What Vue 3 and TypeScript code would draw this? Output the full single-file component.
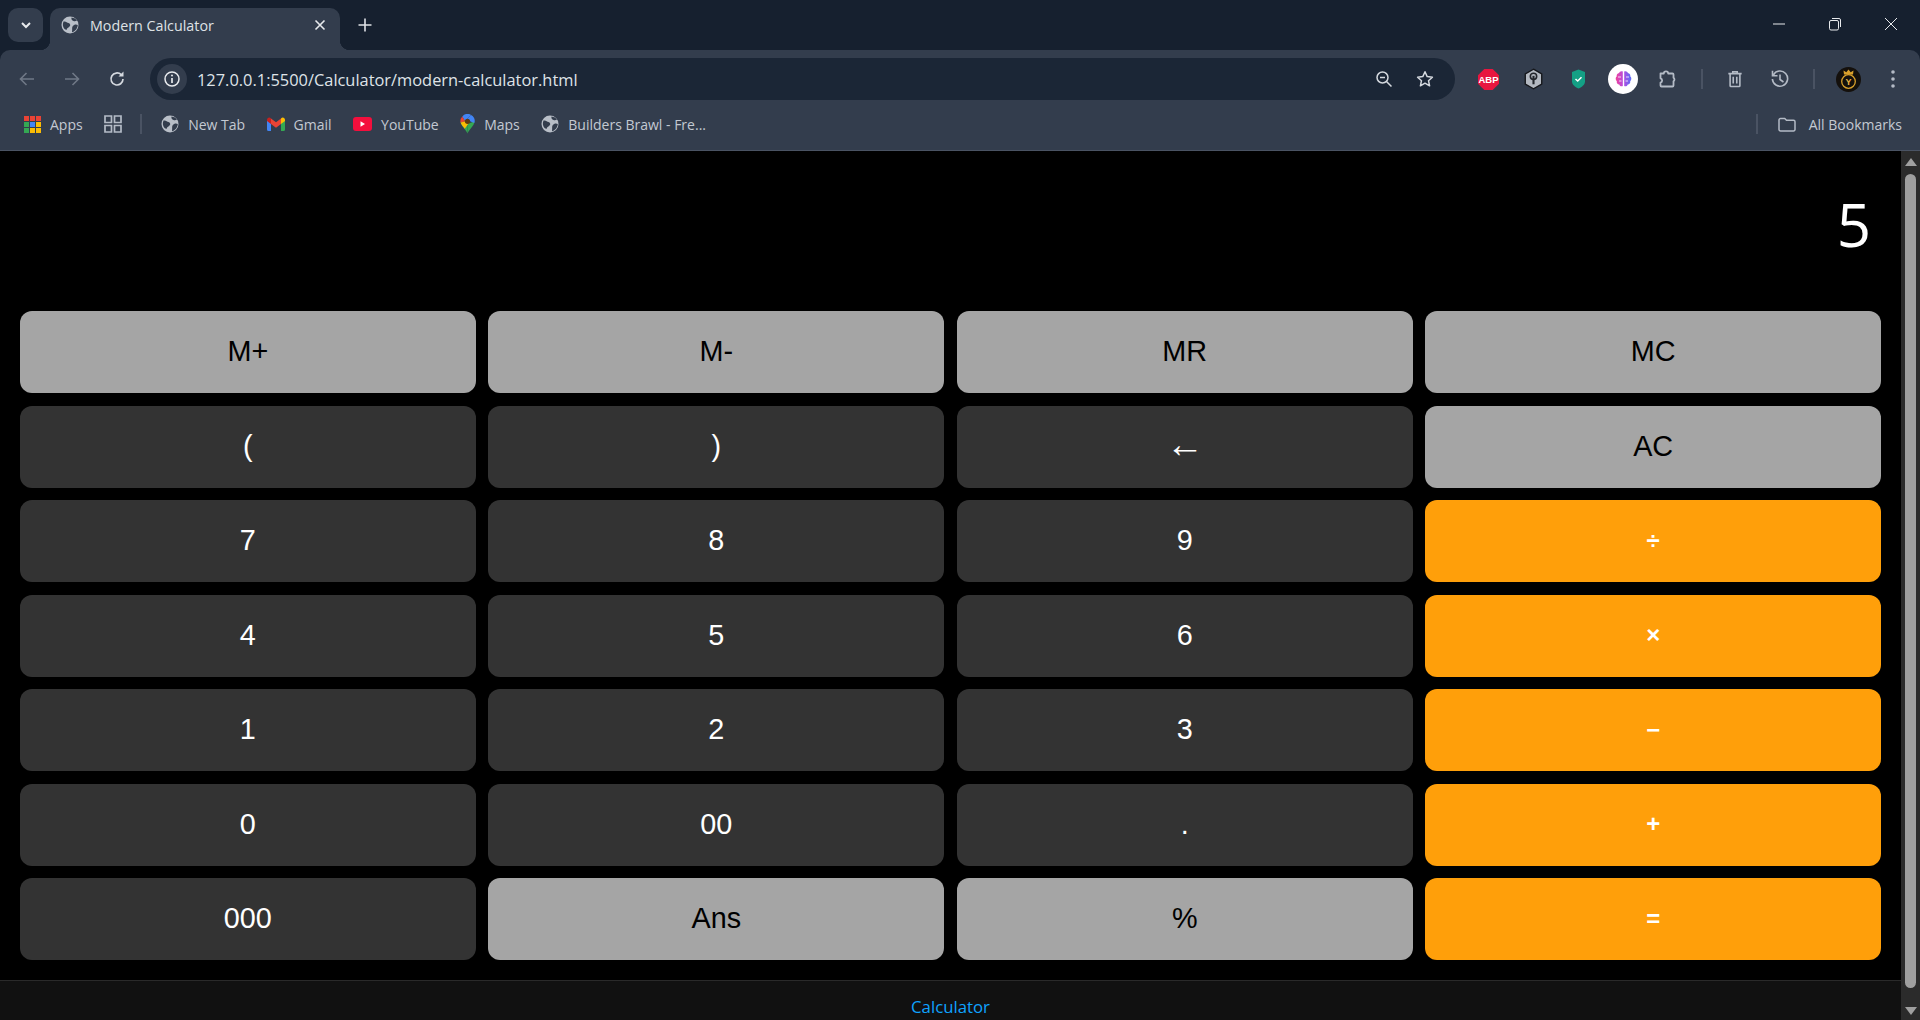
<script setup lang="ts">
type Kind = 'gray' | 'dark' | 'op'

interface Key {
  label: string
  kind: Kind
}

const keys: Key[] = [
  { label: 'M+', kind: 'gray' },
  { label: 'M-', kind: 'gray' },
  { label: 'MR', kind: 'gray' },
  { label: 'MC', kind: 'gray' },
  { label: '(', kind: 'dark' },
  { label: ')', kind: 'dark' },
  { label: '←', kind: 'dark' },
  { label: 'AC', kind: 'gray' },
  { label: '7', kind: 'dark' },
  { label: '8', kind: 'dark' },
  { label: '9', kind: 'dark' },
  { label: '÷', kind: 'op' },
  { label: '4', kind: 'dark' },
  { label: '5', kind: 'dark' },
  { label: '6', kind: 'dark' },
  { label: '×', kind: 'op' },
  { label: '1', kind: 'dark' },
  { label: '2', kind: 'dark' },
  { label: '3', kind: 'dark' },
  { label: '−', kind: 'op' },
  { label: '0', kind: 'dark' },
  { label: '00', kind: 'dark' },
  { label: '.', kind: 'dark' },
  { label: '+', kind: 'op' },
  { label: '000', kind: 'dark' },
  { label: 'Ans', kind: 'gray' },
  { label: '%', kind: 'gray' },
  { label: '=', kind: 'op' },
]

const appColors = ['#ea4335', '#ea4335', '#ea4335', '#34a853', '#4285f4', '#fbbc04', '#34a853', '#fbbc04', '#fbbc04']

const globePath =
  'M2.5 5.5C5 5 6 6.5 7.5 7S10 9 8.5 10.5 6 12 5.5 14L3.5 13C1.5 10.5 1.5 8 2.5 5.5ZM10.5 1.5C10 3.5 11 4.5 12.5 5S15 5 16 4.5L14 2.5ZM16.8 9C15 8 13 8.5 11.8 10S11.5 13.5 11 16.3C14 15.5 16.5 12.5 16.8 9Z'
</script>

<template>
  <div class="window">
    <!-- tab strip -->
    <div class="tabstrip">
      <button class="tab-search">
        <svg width="14" height="14" viewBox="0 0 14 14"><path d="M3 5l4 4 4-4" fill="none" stroke="#e8eaed" stroke-width="2" /></svg>
      </button>
      <div class="tab">
        <svg class="globe" width="18" height="18" viewBox="0 0 18 18">
          <circle cx="9" cy="9" r="8.5" fill="#b9bfc8" />
          <path :d="globePath" fill="#333d4d" />
        </svg>
        <span class="tab-title">Modern Calculator</span>
        <svg class="tab-close" width="12" height="12" viewBox="0 0 12 12"><path d="M1.5 1.5l9 9M10.5 1.5l-9 9" stroke="#e8eaed" stroke-width="1.6" /></svg>
      </div>
      <svg class="new-tab" width="14" height="14" viewBox="0 0 14 14"><path d="M7 .5v13M.5 7h13" stroke="#dfe2e6" stroke-width="1.6" /></svg>
      <div class="win-controls">
        <svg width="14" height="14" viewBox="0 0 14 14"><path d="M1 7h12" stroke="#e8eaed" stroke-width="1" /></svg>
        <svg width="14" height="14" viewBox="0 0 14 14"><rect x="1.5" y="3.5" width="9" height="9.5" rx="1.5" fill="none" stroke="#e8eaed" /><path d="M4 1.5h7a1.5 1.5 0 0 1 1.5 1.5v7" fill="none" stroke="#e8eaed" /></svg>
        <svg width="14" height="14" viewBox="0 0 14 14"><path d="M1 1l12 12M13 1L1 13" stroke="#e8eaed" stroke-width="1" /></svg>
      </div>
    </div>

    <!-- toolbar -->
    <div class="toolbar">
      <div class="nav-btns">
        <svg width="18" height="18" viewBox="0 0 18 18"><path d="M16 9H3M8.5 3L2.5 9l6 6" fill="none" stroke="#6f7886" stroke-width="1.6" /></svg>
        <svg width="18" height="18" viewBox="0 0 18 18"><path d="M2 9h13M9.5 3l6 6-6 6" fill="none" stroke="#6f7886" stroke-width="1.6" /></svg>
        <svg width="18" height="18" viewBox="0 0 18 18"><path d="M15 9a6 6 0 1 1-1.8-4.3" fill="none" stroke="#d5d9df" stroke-width="1.7" /><path d="M15.5 1.5v5h-5z" fill="#d5d9df" /></svg>
      </div>
      <div class="omnibox">
        <span class="site-info">
          <svg width="18" height="18" viewBox="0 0 18 18"><circle cx="9" cy="9" r="7" fill="none" stroke="#e8eaed" stroke-width="1.5" /><path d="M9 8v5" stroke="#e8eaed" stroke-width="1.7" /><circle cx="9" cy="5.6" r="1" fill="#e8eaed" /></svg>
        </span>
        <span class="url">127.0.0.1:5500/Calculator/modern-calculator.html</span>
        <svg class="omni-zoom" width="18" height="18" viewBox="0 0 18 18"><circle cx="7.5" cy="7.5" r="5.5" fill="none" stroke="#d5d9df" stroke-width="1.5" /><path d="M5 7.5h5" stroke="#d5d9df" stroke-width="1.5" /><path d="M11.5 11.5l5 5" stroke="#d5d9df" stroke-width="1.5" /></svg>
        <svg class="omni-star" width="18" height="18" viewBox="0 0 18 18"><path d="M9 1.8l2.2 4.8 5.2.6-3.9 3.5 1.1 5.1L9 13.2l-4.6 2.6 1.1-5.1L1.6 7.2l5.2-.6z" fill="none" stroke="#d5d9df" stroke-width="1.5" stroke-linejoin="round" /></svg>
      </div>
      <div class="ext-icons">
        <span class="slot">
          <svg width="21" height="21" viewBox="0 0 20 20">
            <path d="M6 0h8l6 6v8l-6 6H6l-6-6V6z" fill="#e8163f" />
            <text x="10" y="13.6" class="abp-text">ABP</text>
          </svg>
        </span>
        <span class="slot">
          <svg width="19" height="22" viewBox="0 0 18 20">
            <path d="M9 .7l7.8 4.5v9.6L9 19.3 1.2 14.8V5.2z" fill="#b4b9c1" stroke="#16181c" stroke-width="1.3" />
            <circle cx="9" cy="7.5" r="3" fill="none" stroke="#24272c" stroke-width="1.5" />
            <path d="M9 7v8" stroke="#24272c" stroke-width="2" />
          </svg>
        </span>
        <span class="slot">
          <svg width="15" height="20" viewBox="0 0 14 20">
            <path d="M7 .5L13.5 3v9.5c0 3-3 5.5-6.5 7-3.5-1.5-6.5-4-6.5-7V3z" fill="#14a085" />
            <path d="M4 10l2.2 2L10 8.3" fill="none" stroke="#fff" stroke-width="1.5" />
          </svg>
        </span>
        <span class="slot">
          <span class="brain-badge">
            <svg width="19" height="18" viewBox="0 0 18 18">
              <defs>
                <linearGradient id="brainGrad" x1="0" y1="0" x2="1" y2="0">
                  <stop offset="0" stop-color="#f0409a" />
                  <stop offset="0.5" stop-color="#b44de0" />
                  <stop offset="1" stop-color="#5a6cf5" />
                </linearGradient>
              </defs>
              <path d="M8.3 1.5C6.5.8 5 1.7 4.6 3 2.8 3.2 1.8 4.8 2.3 6.3 .8 7.5.8 10 2.3 11.2c-.4 1.7.8 3.2 2.4 3.2.6 1.7 2.3 2.3 3.6 1.5zM9.700 1.5C11.500.8 13 1.700 13.400 3c1.800.2 2.800 1.800 2.300 3.300 1.500 1.200 1.500 3.700 0 4.900.4 1.700-.8 3.200-2.400 3.200-.6 1.700-2.300 2.300-3.600 1.500z" fill="url(#brainGrad)" />
              <path d="M3.5 7h3M4.5 11h2.5M14.5 7h-3M13.5 11H11" stroke="#fff" stroke-width=".8" />
            </svg>
          </span>
        </span>
        <span class="slot">
          <svg width="20" height="20" viewBox="0 0 20 20">
            <path d="M2.5 4.5h3.3a2.2 2.2 0 0 1 4.4 0h4.3a1 1 0 0 1 1 1v3.3a2 2 0 0 1 0 3.4v4.3a1 1 0 0 1-1 1H3.500a1 1 0 0 1-1-1v-2.800a2.300 2.300 0 0 0 0-4.400z" fill="none" stroke="#b4bbc6" stroke-width="1.8" stroke-linejoin="round" />
          </svg>
        </span>
        <span class="tool-sep"></span>
        <span class="slot">
          <svg width="16" height="18" viewBox="0 0 18 20">
            <path d="M1.5 4h15M6.5 4V1.8h5V4M3.5 4v13.500a1 1 0 0 0 1 1h9a1 1 0 0 0 1-1V4M7 7.500v7.500M11 7.500v7.500" fill="none" stroke="#b4bbc6" stroke-width="1.8" />
          </svg>
        </span>
        <span class="slot">
          <svg width="20" height="20" viewBox="0 0 20 20">
            <path d="M3.3 6A7.600 7.600 0 1 1 2.400 10" fill="none" stroke="#b4bbc6" stroke-width="1.6" />
            <path d="M2.5 1.8v5h5" fill="none" stroke="#b4bbc6" stroke-width="1.6" />
            <path d="M10 5.5V10.5l3.500 2.500" fill="none" stroke="#b4bbc6" stroke-width="1.6" />
          </svg>
        </span>
        <span class="tool-sep tool-sep-last"></span>
        <span class="slot">
          <svg width="25" height="25" viewBox="0 0 25 25">
            <circle cx="12.5" cy="12.5" r="12.5" fill="#14100c" />
            <circle cx="12.5" cy="14.5" r="6.8" fill="none" stroke="#d9a02c" stroke-width="1.3" />
            <path d="M8 7.5L7.5 3.5l2.8 1.8L12.5 2.500l2.200 2.800L17.500 3.500 17 7.500z" fill="#d9a02c" />
            <text x="12.5" y="18" class="avatar-text">Y</text>
          </svg>
        </span>
        <span class="slot">
          <svg width="6" height="20" viewBox="0 0 6 20">
            <circle cx="3" cy="3" r="1.8" fill="#b4bbc6" />
            <circle cx="3" cy="10" r="1.8" fill="#b4bbc6" />
            <circle cx="3" cy="17" r="1.8" fill="#b4bbc6" />
          </svg>
        </span>
      </div>
    </div>

    <!-- bookmarks bar -->
    <div class="bookmarks">
      <span class="bm">
        <svg width="17" height="17" viewBox="0 0 17 17">
          <rect
            v-for="(c, i) in appColors"
            :key="i"
            :x="(i % 3) * 6"
            :y="Math.floor(i / 3) * 6"
            width="5"
            height="5"
            :fill="c"
          />
        </svg>
        Apps
      </span>
      <svg class="tab-groups" width="18" height="18" viewBox="0 0 18 18">
        <path d="M1 1h6.500v6.500H1zM10.500 1H17v6.500h-6.500zM1 10.500h6.500V17H1zM10.500 10.500H17V17h-6.500z" fill="none" stroke="#b4bbc6" stroke-width="1.7" />
      </svg>
      <span class="bm-sep"></span>
      <span class="bm">
        <svg width="18" height="18" viewBox="0 0 18 18">
          <circle cx="9" cy="9" r="8.5" fill="#b9bfc8" />
          <path :d="globePath" fill="#333d4d" />
        </svg>
        New Tab
      </span>
      <span class="bm">
        <svg width="18" height="14" viewBox="0 0 18 14">
          <path d="M0 3v9.500A1.500 1.500 0 0 0 1.500 14H4V6.500z" fill="#4285f4" />
          <path d="M18 3v9.500a1.500 1.500 0 0 1-1.500 1.500H14V6.500z" fill="#34a853" />
          <path d="M4 7V1.500L9 5.300l5-3.800V7L9 10.800z" fill="#ea4335" />
          <path d="M0 3C0 .8 2.500-.5 4 1.500V7L0 4z" fill="#c5221f" />
          <path d="M18 3c0-2.200-2.500-3.500-4-1.500V7l4-3z" fill="#fbbc04" />
        </svg>
        Gmail
      </span>
      <span class="bm">
        <svg width="19" height="14" viewBox="0 0 19 14">
          <rect width="19" height="14" rx="3" fill="#f40f3d" />
          <path d="M7.500 4.300v5.400L12 7z" fill="#fff" />
        </svg>
        YouTube
      </span>
      <span class="bm">
        <svg width="15" height="20" viewBox="0 0 15 20">
          <path d="M7.500 19.500C6 15.500 .5 12 .5 7.300L7.500 10z" fill="#34a853" />
          <path d="M7.500 19.500c1.500-4 7-7.500 7-12.200L7.500 10z" fill="#34a853" />
          <path d="M2.300 2.500A7 7 0 0 1 11 .9L5 7.300z" fill="#4285f4" />
          <path d="M2.300 2.500A7 7 0 0 0 .6 8.800L5 7.300z" fill="#ea4335" />
          <path d="M.6 8.800C1.500 11 3.500 13 4.800 14.800L10 7.300 5 7.300z" fill="#fbbc04" />
          <path d="M11 .9a7 7 0 0 1 3.300 8.200L10 7.300 5 7.300z" fill="#4285f4" />
          <circle cx="7.5" cy="7.3" r="2.6" fill="#5f3b10" />
        </svg>
        Maps
      </span>
      <span class="bm">
        <svg width="18" height="18" viewBox="0 0 18 18">
          <circle cx="9" cy="9" r="8.5" fill="#b9bfc8" />
          <path :d="globePath" fill="#333d4d" />
        </svg>
        Builders Brawl - Fre...
      </span>
      <span class="bm-right">
        <span class="bm-sep"></span>
        <span class="bm all-bm">
          <svg width="18" height="15" viewBox="0 0 18 15">
            <path d="M1 3a1.500 1.500 0 0 1 1.500-1.500h4.200L8.500 3.300h7A1.500 1.500 0 0 1 17 4.800v7.700a1.500 1.500 0 0 1-1.500 1.500h-13A1.500 1.500 0 0 1 1 12.500z" fill="none" stroke="#b4bbc6" stroke-width="1.5" />
          </svg>
          All Bookmarks
        </span>
      </span>
    </div>

    <!-- page -->
    <div class="viewport">
      <div class="page">
        <main class="calculator">
          <div class="display">5</div>
          <div class="pad">
            <button
              v-for="key in keys"
              :key="key.label"
              class="key"
              :class="[`key-${key.kind}`, { 'key-arrow': key.label === '←' }]"
            >
              {{ key.label }}
            </button>
          </div>
        </main>
        <footer class="footer">Calculator</footer>
      </div>
      <div class="scrollbar">
        <span class="arrow-up"></span>
        <span class="thumb"></span>
        <span class="arrow-down"></span>
      </div>
    </div>
  </div>
</template>

<style>
html,
body {
  margin: 0;
  height: 100%;
  overflow: hidden;
  background: #000;
}
</style>

<style scoped>
.window {
  display: flex;
  flex-direction: column;
  height: 1020px;
  overflow: hidden;
  font-family: 'Open Sans', 'Noto Sans', sans-serif;
  background: #16202f;
}

/* tab strip */
.tabstrip {
  display: flex;
  align-items: flex-end;
  height: 50px;
  flex: none;
  padding-left: 8px;
}

.tab-search {
  display: flex;
  align-items: center;
  justify-content: center;
  width: 35px;
  height: 34px;
  margin-bottom: 8px;
  padding: 0;
  border: 0;
  border-radius: 10px;
  background: #333d4d;
}

.tab {
  position: relative;
  display: flex;
  align-items: center;
  width: 290px;
  height: 42px;
  box-sizing: border-box;
  margin-left: 7px;
  padding: 0 14px 8px 11px;
  border-radius: 10px 10px 0 0;
  background: #333d4d;
}

.tab::before,
.tab::after {
  content: '';
  position: absolute;
  bottom: 0;
  width: 10px;
  height: 10px;
}

.tab::before {
  left: -10px;
  background: radial-gradient(circle at 0 0, transparent 10px, #333d4d 10.5px);
}

.tab::after {
  right: -10px;
  background: radial-gradient(circle at 100% 0, transparent 10px, #333d4d 10.5px);
}

.globe {
  flex: none;
}

.tab-title {
  margin-left: 11px;
  font-size: 14.3px;
  color: #dfe2e6;
}

.tab-close {
  margin-left: auto;
}

.new-tab {
  margin: 0 0 18px 18px;
}

.win-controls {
  display: flex;
  gap: 42px;
  margin: 0 22px 19px auto;
}

/* toolbar */
.toolbar {
  display: flex;
  align-items: flex-start;
  height: 50px;
  flex: none;
  padding-top: 8px;
  box-sizing: border-box;
  border-radius: 10px 10px 0 0;
  background: #333d4d;
}

.nav-btns {
  display: flex;
  align-items: center;
  gap: 27px;
  width: 150px;
  height: 42px;
  padding-left: 18px;
  box-sizing: border-box;
}

.omnibox {
  display: flex;
  align-items: center;
  width: 1305px;
  height: 42px;
  box-sizing: border-box;
  padding: 0 21px 0 7px;
  border-radius: 21px;
  background: #1b2636;
}

.site-info {
  display: flex;
  align-items: center;
  justify-content: center;
  width: 30px;
  height: 30px;
  border-radius: 50%;
  background: #333d4d;
}

.url {
  margin-left: 10px;
  font-size: 16.4px;
  color: #dfe3e8;
}

.omni-zoom {
  margin-left: auto;
}

.omni-star {
  margin-left: 23px;
}

.ext-icons {
  display: flex;
  align-items: center;
  height: 42px;
  margin-left: 10.5px;
}

.slot {
  display: flex;
  align-items: center;
  justify-content: center;
  width: 45px;
  height: 42px;
}

.brain-badge {
  display: flex;
  align-items: center;
  justify-content: center;
  width: 30px;
  height: 30px;
  border-radius: 50%;
  background: #fff;
}

.abp-text {
  font-family: 'Liberation Sans', sans-serif;
  font-size: 9px;
  font-weight: 700;
  fill: #fff;
  text-anchor: middle;
}

.avatar-text {
  font-family: 'Liberation Sans', sans-serif;
  font-size: 9px;
  font-weight: 700;
  fill: #e7b445;
  text-anchor: middle;
}

.tool-sep {
  width: 2px;
  height: 20px;
  margin: 0 10px;
  background: #4a5363;
}

.tool-sep-last {
  margin-right: 11px;
}

/* bookmarks */
.bookmarks {
  display: flex;
  align-items: center;
  height: 51px;
  flex: none;
  box-sizing: border-box;
  padding: 0 18px 2px 24px;
  border-bottom: 1px solid #4a5363;
  background: #333d4d;
  font-size: 14px;
  color: #c3c9d2;
}

.bm {
  display: flex;
  align-items: center;
  gap: 9px;
  margin-right: 21.5px;
  white-space: nowrap;
}

.tab-groups {
  margin-right: 18px;
}

.bm-sep {
  width: 2px;
  height: 20px;
  margin-right: 19px;
  background: #4a5363;
}

.bm-right {
  display: flex;
  align-items: center;
  margin-left: auto;
}

.bm-right .bm-sep {
  margin-right: 20px;
}

.all-bm {
  gap: 13px;
  margin-right: 0;
}

/* page */
.viewport {
  display: flex;
  flex: 1;
  min-height: 0;
  background: #000;
}

.page {
  display: flex;
  flex: 1;
  flex-direction: column;
  min-width: 0;
}

.calculator {
  height: 829px;
  flex: none;
  box-sizing: border-box;
  padding: 0 20px;
}

.display {
  display: flex;
  align-items: center;
  justify-content: flex-end;
  height: 160.4px;
  box-sizing: border-box;
  padding: 0 10px 14px 0;
  font-size: 60px;
  line-height: 1;
  color: #fff;
}

.pad {
  display: grid;
  grid-template-columns: repeat(4, 1fr);
  grid-auto-rows: 81.7px;
  gap: 12.8px;
}

.key {
  padding: 0 0 1px;
  border: 0;
  border-radius: 12px;
  font-family: 'Liberation Sans', Arial, sans-serif;
  font-size: 28.8px;
}

.key-gray {
  background: #a5a5a5;
  color: #000;
}

.key-dark {
  background: #333;
  color: #fff;
}

.key-op {
  background: #ff9f0a;
  color: #fff;
  font-size: 24px;
  font-weight: 700;
}

.key-arrow {
  padding-bottom: 5px;
  font-size: 38px;
}

.footer {
  flex: 1;
  box-sizing: border-box;
  padding-top: 14px;
  border-top: 1px solid #2a2a2a;
  background: #111;
  text-align: center;
  font-size: 16.8px;
  line-height: 24px;
  color: #0fa3ff;
}

/* scrollbar */
.scrollbar {
  display: flex;
  flex: none;
  flex-direction: column;
  align-items: center;
  width: 19px;
  box-sizing: border-box;
  padding: 7px 0 5px;
  background: #2b2b2b;
}

.arrow-up,
.arrow-down {
  width: 0;
  height: 0;
  border-left: 6px solid transparent;
  border-right: 6px solid transparent;
}

.arrow-up {
  border-bottom: 8px solid #a0a0a0;
}

.arrow-down {
  border-top: 8px solid #a0a0a0;
}

.thumb {
  flex: 1;
  width: 11px;
  margin: 8px 0 19px;
  border-radius: 6px;
  background: #9f9f9f;
}
</style>
